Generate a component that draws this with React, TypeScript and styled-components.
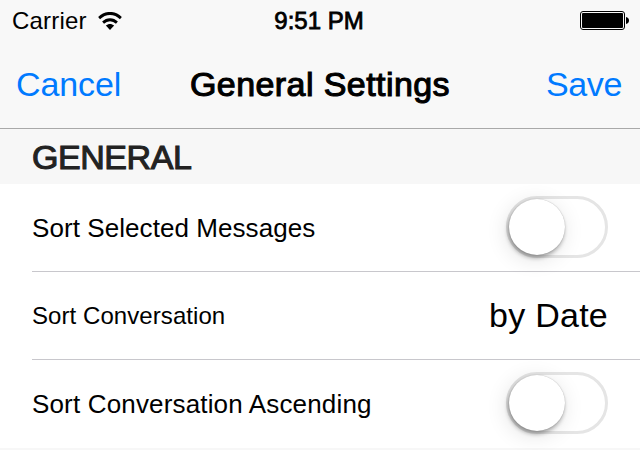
import React from "react";
import styled, { createGlobalStyle } from "styled-components";

const GlobalStyle = createGlobalStyle`
  *, *::before, *::after { box-sizing: border-box; }
  body { margin: 0; background: #f7f7f7; font-family: "Liberation Sans", Arial, sans-serif; color: #000; }
`;

const Screen = styled.main`
  width: 640px;
  height: 450px;
  overflow: hidden;
  background: #f7f7f7;
  white-space: nowrap;
`;

const Header = styled.header`
  height: 129px;
  border-bottom: 1px solid #a9a9a9;
  background: #f8f8f8;
`;

const StatusBar = styled.div`
  display: grid;
  grid-template-columns: 1fr auto 1fr;
  align-items: center;
  height: 40px;
  padding: 0 11px 0 12px;
  font-size: 24px;
  line-height: 41px;
`;

const StatusGroup = styled.div<{ $end?: boolean }>`
  display: flex;
  align-items: center;
  justify-content: ${(p) => (p.$end ? "flex-end" : "flex-start")};
  gap: 11px;
`;

const Carrier = styled.span`
  letter-spacing: 0.2px;
`;

const Clock = styled.time`
  margin: 0 1.5px 0 -1.5px;
  -webkit-text-stroke: 0.8px #000;
`;

const NavBar = styled.nav`
  display: grid;
  grid-template-columns: 1fr auto 1fr;
  align-items: center;
  height: 88px;
  padding: 0 18px 0 16px;
`;

const NavButton = styled.button<{ $end?: boolean }>`
  justify-self: ${(p) => (p.$end ? "end" : "start")};
  padding: 0;
  border: 0;
  background: none;
  color: #007aff;
  font: 34px/88px "Liberation Sans", Arial, sans-serif;
  letter-spacing: ${(p) => (p.$end ? -0.35 : -0.1)}px;
`;

const Title = styled.h1`
  margin: 0 -1px 0 1px;
  font-size: 34px;
  font-weight: 400;
  line-height: 88px;
  letter-spacing: 0.42px;
  -webkit-text-stroke: 1.1px #000;
`;

const SectionTitle = styled.h2`
  margin: 0;
  padding-left: 32px;
  height: 55px;
  font-size: 34px;
  font-weight: 400;
  line-height: 56px;
  color: #222;
  letter-spacing: -0.45px;
  -webkit-text-stroke: 1.1px #222;
`;

const List = styled.div`
  height: 264px;
  padding-left: 32px;
  background: #fff;
`;

const Row = styled.div`
  display: flex;
  align-items: center;
  justify-content: space-between;
  height: 88px;
  padding-right: 32px;
  border-bottom: 1px solid #c8c7cc;
  &:last-child { border-bottom-color: transparent; }
`;

const Label = styled.span<{ $small?: boolean; $tracking?: number }>`
  font-size: ${(p) => (p.$small ? 24 : 26)}px;
  line-height: 88px;
  letter-spacing: ${(p) => p.$tracking ?? 0.07}px;
`;

const Value = styled.span`
  font-size: 34px;
  line-height: 87px;
  letter-spacing: 0.25px;
`;

const Toggle = styled.button`
  width: 102px;
  height: 62px;
  margin-bottom: 1px;
  padding: 0;
  border: 3px solid #e5e5e5;
  border-radius: 31px;
  background: #fff;
`;

const Knob = styled.span`
  display: block;
  width: 56px;
  height: 56px;
  border-radius: 50%;
  background: #fff;
  box-shadow: 0 0 1px rgba(0, 0, 0, 0.3), -1px 3px 4px rgba(0, 0, 0, 0.32), -2px 4px 22px rgba(0, 0, 0, 0.12);
`;

const WifiIcon = () => (
  <svg width="24" height="18" viewBox="0 0 26 18" preserveAspectRatio="none" fill="none" stroke="#000">
    <path d="M1.2 6.200C8 -.2 18 -.2 24.800 6.200" strokeWidth="3" />
    <path d="M5.500 10.700C9.800 6.700 16.200 6.700 20.500 10.700" strokeWidth="3" />
    <path d="M13 18L8.500 13.600C11.200 11.400 14.800 11.400 17.500 13.600Z" fill="#000" stroke="none" />
  </svg>
);

const BatteryIcon = () => (
  <svg width="49" height="19" viewBox="0 0 49 19">
    <rect x=".5" y=".5" width="44" height="18" rx="2.5" fill="none" stroke="#000" />
    <rect x="2" y="2" width="41" height="15" rx="1" />
    <path d="M46 6C50 6.500 50 12.500 46 13Z" />
  </svg>
);

const SwitchControl = ({ label }: { label: string }) => (
  <Toggle type="button" role="switch" aria-checked={false} aria-label={label}>
    <Knob />
  </Toggle>
);

export default function App() {
  return (
    <Screen>
      <GlobalStyle />
      <Header>
        <StatusBar>
          <StatusGroup>
            <Carrier>Carrier</Carrier>
            <WifiIcon />
          </StatusGroup>
          <Clock>9:51 PM</Clock>
          <StatusGroup $end>
            <BatteryIcon />
          </StatusGroup>
        </StatusBar>
        <NavBar>
          <NavButton>Cancel</NavButton>
          <Title>General Settings</Title>
          <NavButton $end>Save</NavButton>
        </NavBar>
      </Header>
      <SectionTitle>GENERAL</SectionTitle>
      <List>
        <Row>
          <Label>Sort Selected Messages</Label>
          <SwitchControl label="Sort Selected Messages" />
        </Row>
        <Row>
          <Label $small>Sort Conversation</Label>
          <Value>by Date</Value>
        </Row>
        <Row>
          <Label $tracking={0.16}>Sort Conversation Ascending</Label>
          <SwitchControl label="Sort Conversation Ascending" />
        </Row>
      </List>
    </Screen>
  );
}
